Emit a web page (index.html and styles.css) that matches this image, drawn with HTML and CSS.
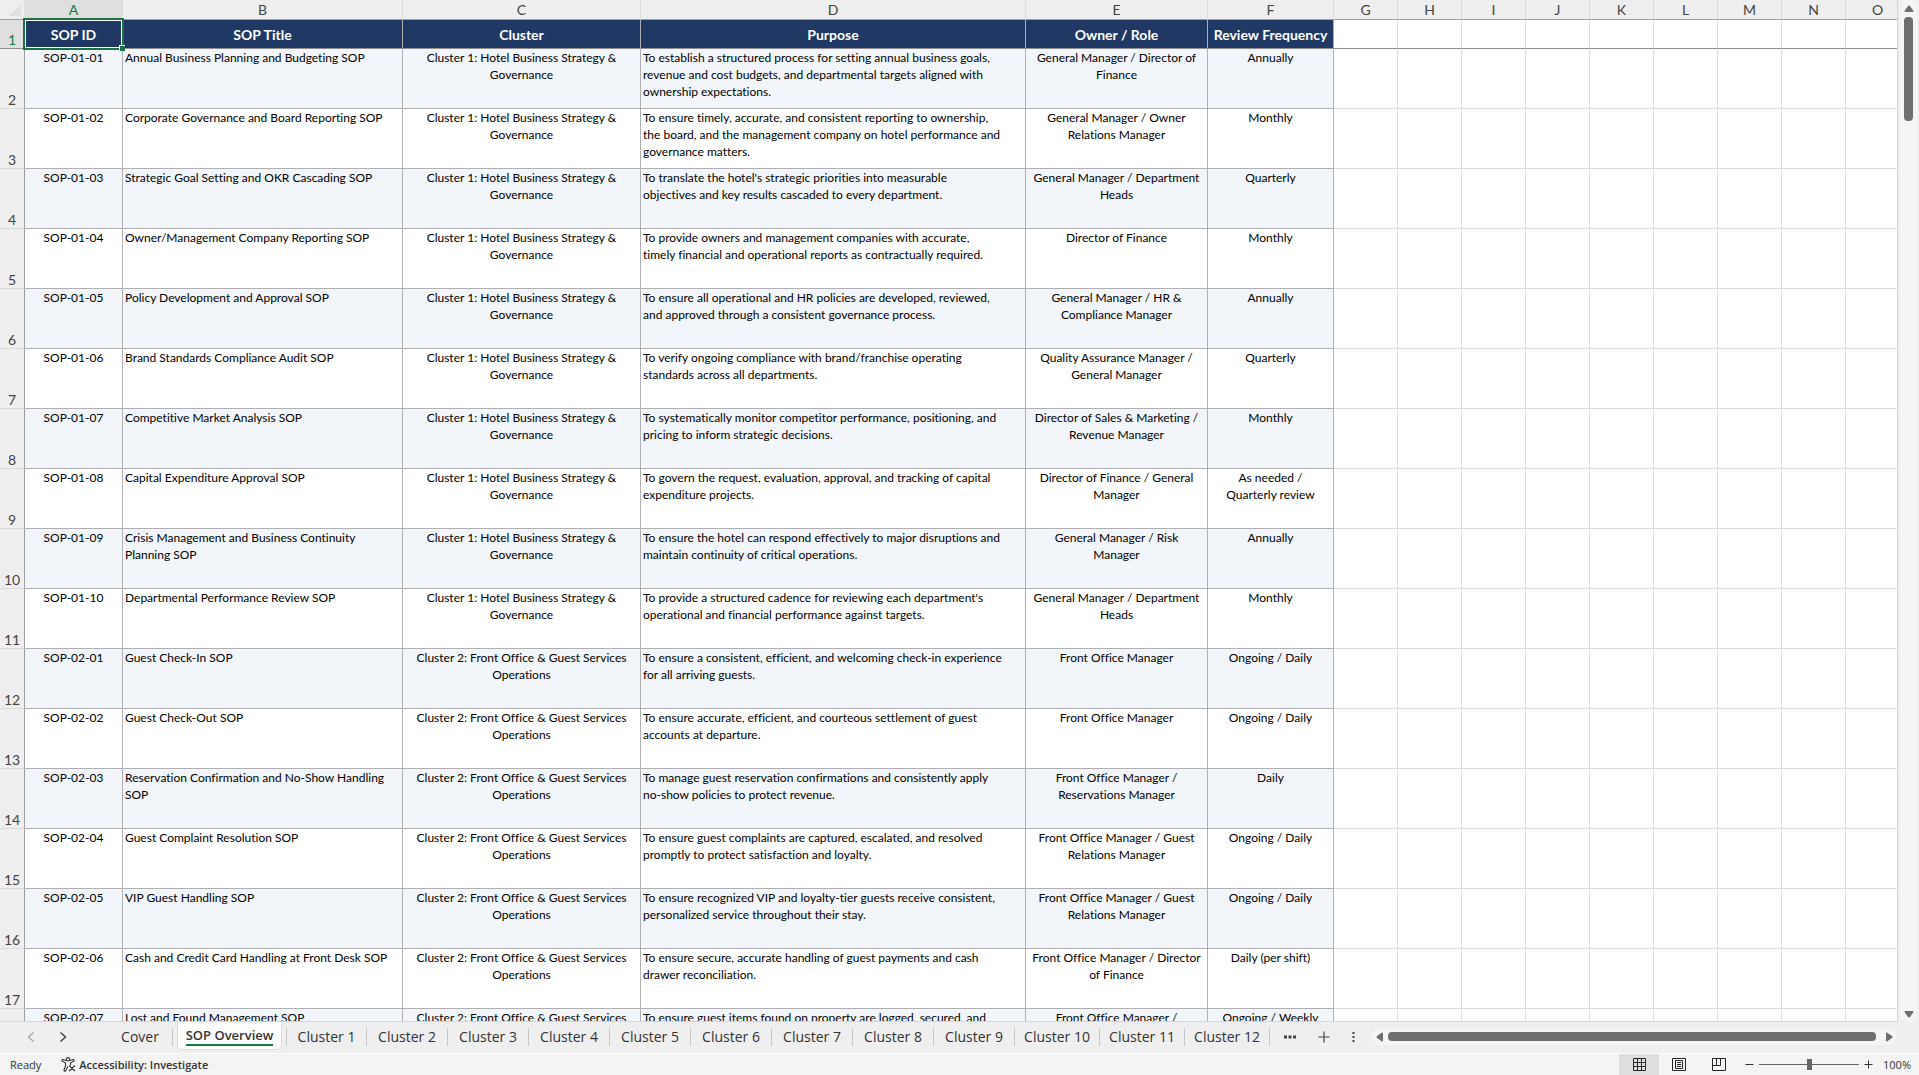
FILE: index.html
```html
<!DOCTYPE html>
<html lang="en">
<head>
<meta charset="UTF-8">
<meta name="viewport" content="width=device-width, initial-scale=1.0">
<title>SOP Overview</title>
<link rel="stylesheet" href="styles.css">
</head>
<body>
<div class="workbook">
    <div class="sheet-area">
        <div class="grid">
            <table class="sheet">
                <colgroup>
                    <col class="w-head"><col class="w-a"><col class="w-b"><col class="w-c"><col class="w-d"><col class="w-e"><col class="w-f">
                    <col class="w-std"><col class="w-std"><col class="w-std"><col class="w-std"><col class="w-std"><col class="w-std"><col class="w-std"><col class="w-std"><col>
                </colgroup>
                <thead>
                    <tr class="letters">
                        <th class="corner"><svg width="24" height="19" viewBox="0 0 24 19"><path d="M21 5v11H9z" fill="#dfdfdf"/></svg></th>
                        <th class="selected">A</th><th>B</th><th>C</th><th>D</th><th>E</th><th>F</th><th>G</th><th>H</th><th>I</th><th>J</th><th>K</th><th>L</th><th>M</th><th>N</th><th class="last">O</th>
                    </tr>
                    <tr class="titles">
                        <th class="num selected">1</th>
                        <th class="title active">SOP ID<span class="handle"></span></th>
                        <th class="title">SOP Title</th>
                        <th class="title">Cluster</th>
                        <th class="title">Purpose</th>
                        <th class="title">Owner / Role</th>
                        <th class="title">Review Frequency</th>
                        <td></td><td></td><td></td><td></td><td></td><td></td><td></td><td></td><td></td>
                    </tr>
                </thead>
                <tbody id="rows"></tbody>
            </table>
        </div>
        <div class="vscroll">
            <svg class="arrow" width="10" height="8" viewBox="0 0 10 8"><path d="M4 1Q5 0 6 1L9.500 6Q9.500 7 8.500 7H1.500Q.5 7 .5 6z" fill="#6e6e6e"/></svg>
            <div class="vthumb"></div>
            <svg class="arrow bottom" width="10" height="8" viewBox="0 0 10 8"><path d="M4 7Q5 8 6 7L9.500 2Q9.500 1 8.500 1H1.500Q.5 1 .5 2z" fill="#6e6e6e"/></svg>
        </div>
    </div>

    <div class="tab-bar">
        <div class="tab-nav">
            <button type="button" aria-label="Previous sheets"><svg width="8" height="12" viewBox="0 0 8 12"><path d="M6.500 1.500L1.500 6l5 4.500" fill="none" stroke="#a6a6a6" stroke-width="1.300"/></svg></button>
            <button type="button" aria-label="Next sheets"><svg width="8" height="12" viewBox="0 0 8 12"><path d="M1.500 1.500L6.500 6l-5 4.500" fill="none" stroke="#444" stroke-width="1.500"/></svg></button>
        </div>
        <div class="tabs">
            <button type="button" class="tab cover">Cover</button>
            <button type="button" class="tab current"><span>SOP Overview</span></button>
            <button type="button" class="tab">Cluster 1</button>
            <button type="button" class="tab">Cluster 2</button>
            <button type="button" class="tab">Cluster 3</button>
            <button type="button" class="tab">Cluster 4</button>
            <button type="button" class="tab">Cluster 5</button>
            <button type="button" class="tab">Cluster 6</button>
            <button type="button" class="tab">Cluster 7</button>
            <button type="button" class="tab">Cluster 8</button>
            <button type="button" class="tab">Cluster 9</button>
            <button type="button" class="tab wide">Cluster 10</button>
            <button type="button" class="tab wide">Cluster 11</button>
            <button type="button" class="tab wide">Cluster 12</button>
        </div>
        <div class="tab-tools">
            <button type="button" aria-label="All sheets"><svg width="12" height="4" viewBox="0 0 12 4"><path d="M0 .5h3v3H0zM4.500 .5h3v3h-3zM9 .5h3v3H9z" fill="#444"/></svg></button>
            <button type="button" aria-label="New sheet"><svg width="12" height="12" viewBox="0 0 12 12"><path d="M6 .5v11M.5 6h11" stroke="#444" stroke-width="1.200"/></svg></button>
            <button type="button" aria-label="Resize tab bar"><svg width="3" height="12" viewBox="0 0 3 12"><path d="M.5 1h2v2h-2zM.5 5h2v2h-2zM.5 9h2v2h-2z" fill="#444"/></svg></button>
        </div>
        <div class="hscroll">
            <svg width="8" height="10" viewBox="0 0 8 10"><path d="M1 4Q0 5 1 6L6 9.500Q7 9.500 7 8.500V1.500Q7 .5 6 .5z" fill="#6e6e6e"/></svg>
            <div class="hthumb"></div>
            <svg width="8" height="10" viewBox="0 0 8 10"><path d="M7 4Q8 5 7 6L2 9.500Q1 9.500 1 8.500V1.500Q1 .5 2 .5z" fill="#6e6e6e"/></svg>
        </div>
    </div>

    <div class="status-bar">
        <span class="ready">Ready</span>
        <button type="button" class="access">
            <svg width="15" height="15" viewBox="0 0 15 15" fill="none" stroke="#333" stroke-width="1.100"><circle cx="7" cy="2.300" r="1.700"/><path d="M5 3.500L2 2.500Q.5 2.500 1 4L4.500 6v3L3 13q0 1.500 1.500 1L7 9.500M9 3.500L12 2.500Q13.500 2.500 13 4L9.500 6v2M8 8.500l6 5.500M14 8.500l-6 5.500"/></svg>
            Accessibility: Investigate
        </button>
        <div class="views">
            <button type="button" class="view on" aria-label="Normal"><svg width="13" height="13" viewBox="0 0 13 13" fill="none" stroke="#262626"><path d="M.5 .5h12v12H.5zM4.500 0v13M8.500 0v13M0 4.500h13M0 8.500h13"/></svg></button>
            <button type="button" class="view" aria-label="Page Layout"><svg width="14" height="13" viewBox="0 0 14 13" fill="none" stroke="#262626"><path d="M.5 .5h13v12H.5zM3.500 2.500h7v8h-7zM5 4.500h4M5 6.500h4M5 8.500h4"/></svg></button>
            <button type="button" class="view" aria-label="Page Break Preview"><svg width="14" height="13" viewBox="0 0 14 13" fill="none" stroke="#262626"><path d="M.5 .5h13v12H.5zM.5 7.500h8M4.500 .5v7M8.500 .5v7"/></svg></button>
        </div>
        <div class="zoom">
            <button type="button" aria-label="Zoom out"><svg width="9" height="9" viewBox="0 0 9 9"><path d="M.5 4.500h8" stroke="#333"/></svg></button>
            <input type="range" min="0" max="100" value="50" aria-label="Zoom">
            <button type="button" aria-label="Zoom in"><svg width="9" height="9" viewBox="0 0 9 9"><path d="M.5 4.500h8M4.500 .5v8" stroke="#333"/></svg></button>
            <span class="percent">100%</span>
        </div>
    </div>
</div>

<script>
const c1 = 'Cluster 1: Hotel Business Strategy & Governance';
const c2 = 'Cluster 2: Front Office & Guest Services Operations';

// id, title, cluster, purpose, owner, frequency (\n is a line break inside the cell)
const sops = [
    ['SOP-01-01', 'Annual Business Planning and Budgeting SOP', c1, 'To establish a structured process for setting annual business goals,\nrevenue and cost budgets, and departmental targets aligned with\nownership expectations.', 'General Manager / Director of Finance', 'Annually'],
    ['SOP-01-02', 'Corporate Governance and Board Reporting SOP', c1, 'To ensure timely, accurate, and consistent reporting to ownership,\nthe board, and the management company on hotel performance and\ngovernance matters.', 'General Manager / Owner\nRelations Manager', 'Monthly'],
    ['SOP-01-03', 'Strategic Goal Setting and OKR Cascading SOP', c1, 'To translate the hotel\'s strategic priorities into measurable\nobjectives and key results cascaded to every department.', 'General Manager / Department Heads', 'Quarterly'],
    ['SOP-01-04', 'Owner/Management Company Reporting SOP', c1, 'To provide owners and management companies with accurate,\ntimely financial and operational reports as contractually required.', 'Director of Finance', 'Monthly'],
    ['SOP-01-05', 'Policy Development and Approval SOP', c1, 'To ensure all operational and HR policies are developed, reviewed,\nand approved through a consistent governance process.', 'General Manager / HR &\nCompliance Manager', 'Annually'],
    ['SOP-01-06', 'Brand Standards Compliance Audit SOP', c1, 'To verify ongoing compliance with brand/franchise operating\nstandards across all departments.', 'Quality Assurance Manager / General Manager', 'Quarterly'],
    ['SOP-01-07', 'Competitive Market Analysis SOP', c1, 'To systematically monitor competitor performance, positioning, and\npricing to inform strategic decisions.', 'Director of Sales & Marketing / Revenue Manager', 'Monthly'],
    ['SOP-01-08', 'Capital Expenditure Approval SOP', c1, 'To govern the request, evaluation, approval, and tracking of capital\nexpenditure projects.', 'Director of Finance / General\nManager', 'As needed /\nQuarterly review'],
    ['SOP-01-09', 'Crisis Management and Business Continuity\nPlanning SOP', c1, 'To ensure the hotel can respond effectively to major disruptions and\nmaintain continuity of critical operations.', 'General Manager / Risk\nManager', 'Annually'],
    ['SOP-01-10', 'Departmental Performance Review SOP', c1, 'To provide a structured cadence for reviewing each department\'s\noperational and financial performance against targets.', 'General Manager / Department Heads', 'Monthly'],
    ['SOP-02-01', 'Guest Check-In SOP', c2, 'To ensure a consistent, efficient, and welcoming check-in experience\nfor all arriving guests.', 'Front Office Manager', 'Ongoing / Daily'],
    ['SOP-02-02', 'Guest Check-Out SOP', c2, 'To ensure accurate, efficient, and courteous settlement of guest\naccounts at departure.', 'Front Office Manager', 'Ongoing / Daily'],
    ['SOP-02-03', 'Reservation Confirmation and No-Show Handling\nSOP', c2, 'To manage guest reservation confirmations and consistently apply\nno-show policies to protect revenue.', 'Front Office Manager /\nReservations Manager', 'Daily'],
    ['SOP-02-04', 'Guest Complaint Resolution SOP', c2, 'To ensure guest complaints are captured, escalated, and resolved\npromptly to protect satisfaction and loyalty.', 'Front Office Manager / Guest\nRelations Manager', 'Ongoing / Daily'],
    ['SOP-02-05', 'VIP Guest Handling SOP', c2, 'To ensure recognized VIP and loyalty-tier guests receive consistent,\npersonalized service throughout their stay.', 'Front Office Manager / Guest\nRelations Manager', 'Ongoing / Daily'],
    ['SOP-02-06', 'Cash and Credit Card Handling at Front Desk SOP', c2, 'To ensure secure, accurate handling of guest payments and cash\ndrawer reconciliation.', 'Front Office Manager / Director of Finance', 'Daily (per shift)'],
    ['SOP-02-07', 'Lost and Found Management SOP', c2, 'To ensure guest items found on property are logged, secured, and', 'Front Office Manager /', 'Ongoing / Weekly']
];

const tbody = document.getElementById('rows');
sops.forEach((sop, i) => {
    const tr = document.createElement('tr');
    const num = document.createElement('th');
    num.className = 'num';
    num.textContent = i + 2;
    tr.appendChild(num);
    sop.forEach((text, col) => {
        const td = document.createElement('td');
        td.className = col === 1 || col === 3 ? 'data left' : 'data';
        td.textContent = text;
        tr.appendChild(td);
    });
    for (let k = 0; k < 9; k++) {
        tr.appendChild(document.createElement('td'));
    }
    tbody.appendChild(tr);
});
</script>
</body>
</html>
```
FILE: styles.css
```css
* { box-sizing: border-box; }
body {
    margin: 0;
    font-family: "Open Sans", "Noto Sans", sans-serif;
    background: #efefef;
    color: #333;
}
button {
    font-family: inherit;
    color: inherit;
    background: none;
    border: none;
    padding: 0;
    display: flex;
    align-items: center;
    justify-content: center;
}
svg { display: block; }
.workbook {
    height: 100vh;
    display: flex;
    flex-direction: column;
    overflow: hidden;
}

/* grid */
.sheet-area { flex: 1; min-height: 0; display: flex; }
.grid {
    flex: 1;
    min-width: 0;
    overflow: hidden;
    background: #fff;
    border-right: 1px solid #d6d6d6;
    border-bottom: 1px solid #d6d6d6;
}
.sheet {
    width: 100%;
    table-layout: fixed;
    border-collapse: separate;
    border-spacing: 0;
    font-family: Lato, sans-serif;
    font-size: 12px;
    font-variant-ligatures: none;
    line-height: 17px;
    color: #000;
}
.w-head { width: 25px; }
.w-a { width: 98px; }
.w-b { width: 280px; }
.w-c { width: 238px; }
.w-d { width: 385px; }
.w-e { width: 182px; }
.w-f { width: 126px; }
.w-std { width: 64px; }
.sheet th, .sheet td {
    padding: 0;
    border-right: 1px solid #dcdcdc;
    border-bottom: 1px solid #dcdcdc;
    vertical-align: top;
}
.sheet tr > :last-child { border-right: none; }
.sheet .letters th {
    height: 20px;
    background: #efefef;
    border-bottom-color: #9e9e9e;
    font-size: 14px;
    font-weight: normal;
    line-height: 19px;
    color: #444;
}
.sheet .letters .selected { background: #dfdfdf; color: #107c41; }
.sheet .letters .last { padding-left: 12px; }
.sheet .num {
    height: 60px;
    background: #efefef;
    border-right-color: #9e9e9e;
    vertical-align: bottom;
    font-size: 14px;
    font-weight: normal;
    color: #444;
}
.sheet .titles th, .sheet .titles td { height: 29px; border-bottom-color: #8f8f8f; }
.sheet .titles .num { background: #dfdfdf; color: #107c41; }
.sheet .title {
    background: #1f3864;
    border-right-color: #b0b0b4;
    color: #fff;
    font-size: 14px;
    font-weight: bold;
    vertical-align: middle;
    white-space: nowrap;
}
.sheet .active { position: relative; }
.active::before {
    content: "";
    position: absolute;
    inset: -2px;
    border: 2px solid #1e7145;
    box-shadow: inset 0 0 0 1px #fff;
}
.handle {
    position: absolute;
    right: -3px;
    bottom: -3px;
    width: 6px;
    height: 6px;
    background: #1e7145;
    border-top: 1px solid #fff;
    border-left: 1px solid #fff;
}
.sheet .data {
    padding: 0 2px;
    border-color: #b0b0b4;
    text-align: center;
    white-space: pre-line;
}
.sheet .left { text-align: left; }
tbody tr:nth-child(odd) .data { background: #f2f6fb; }

/* scroll bars */
.vscroll {
    width: 17px;
    margin: 0 2px;
    padding: 5px 0 4px;
    border-radius: 8px;
    background: #f5f5f5;
    display: flex;
    flex-direction: column;
    align-items: center;
}
.vthumb { width: 9px; height: 104px; margin-top: 4px; border-radius: 4px; background: #6e6e6e; }
.arrow.bottom { margin-top: auto; }
.hscroll {
    flex: 1;
    height: 17px;
    margin-right: 22px;
    padding: 0 4px;
    border-radius: 8px;
    background: #f5f5f5;
    display: flex;
    align-items: center;
    gap: 4px;
}
.hthumb { flex: 1; height: 9px; margin-right: 5px; border-radius: 4px; background: #6e6e6e; }

/* sheet tabs */
.tab-bar {
    height: 31px;
    padding-bottom: 2px;
    display: flex;
    align-items: center;
}
.tab-nav { width: 108px; padding-left: 27px; display: flex; gap: 24px; }
.tabs { display: flex; align-items: center; height: 100%; }
.tab {
    width: 81px;
    height: 18px;
    border-right: 1px solid #c8c8c8;
    font-size: 14px;
    line-height: 18px;
}
.tab.cover { width: 65px; }
.tab.wide { width: 85px; }
.tab.current {
    align-self: flex-start;
    width: 105px;
    height: 28px;
    margin: 0 4px;
    border: 1px solid #dcdcdc;
    border-top: none;
    border-radius: 0 0 5px 5px;
    background: #fff;
    font-size: 13px;
    font-weight: 600;
}
.current + .tab { border-left: 1px solid #c8c8c8; }
.current span { border-bottom: 2px solid #107c41; }
.tab-tools { display: flex; align-items: center; gap: 22px; padding: 0 17px 0 14px; }

/* status bar */
.status-bar {
    height: 22px;
    border-top: 1px solid #fff;
    background: #f4f4f4;
    display: flex;
    align-items: center;
    font-size: 11px;
}
.ready { margin-left: 10px; }
.access { margin-left: 20px; gap: 3px; font-size: 11px; font-weight: 600; }
.views { margin-left: auto; display: flex; align-self: stretch; }
.view { width: 40px; }
.view.on { background: #dedede; }
.zoom { display: flex; align-items: center; padding: 0 8px 0 6px; }
.zoom input {
    width: 100px;
    height: 14px;
    margin: 0 5px;
    appearance: none;
    background: linear-gradient(#666, #666) center / 100% 1px no-repeat;
}
.zoom input::-webkit-slider-thumb {
    appearance: none;
    width: 5px;
    height: 11px;
    background: #666;
}
.percent { margin-left: 10px; }
```
